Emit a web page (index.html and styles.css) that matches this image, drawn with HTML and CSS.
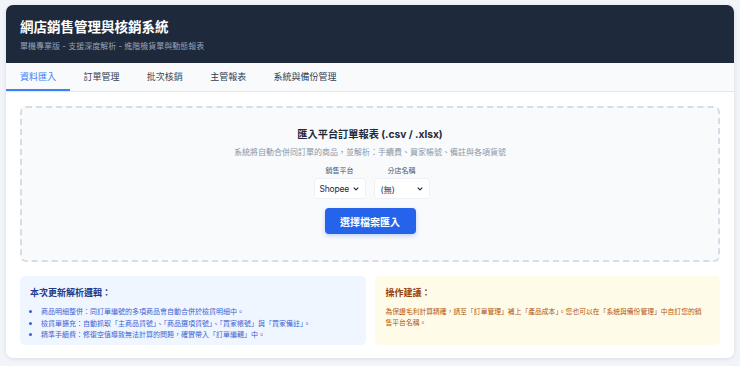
FILE: index.html
```html
<!DOCTYPE html>
<html lang="zh-Hant">
<head>
<meta charset="utf-8">
<title>網店銷售管理與核銷系統</title>
<link rel="stylesheet" href="styles.css">
</head>
<body>
<div class="card">
  <header class="header">
    <h1 class="title">網店銷售管理與核銷系統</h1>
    <p class="subtitle">單機專業版 - 支援深度解析 - 進階檢貨單與動態報表</p>
  </header>
  <nav class="tabs">
    <span class="tab active">資料匯入</span>
    <span class="tab">訂單管理</span>
    <span class="tab">批次核銷</span>
    <span class="tab">主管報表</span>
    <span class="tab">系統與備份管理</span>
  </nav>
  <main class="content">
    <section class="dropzone">
      <h2 class="dz-title">匯入平台訂單報表 (.csv / .xlsx)</h2>
      <p class="dz-desc">系統將自動合併同訂單的商品，並解析：手續費、買家帳號、備註與各項貨號</p>
      <div class="fields">
        <div class="field">
          <span class="field-label">銷售平台</span>
          <div class="select sel-platform"><span>Shopee</span>
            <svg class="chev" width="6" height="4" viewBox="0 0 7 5"><path d="M1 1l2.5 2.5L6 1" fill="none" stroke="#1f2937" stroke-width="1.4" stroke-linecap="round" stroke-linejoin="round"/></svg>
          </div>
        </div>
        <div class="field">
          <span class="field-label">分店名稱</span>
          <div class="select sel-shop"><span>(無)</span>
            <svg class="chev" width="6" height="4" viewBox="0 0 7 5"><path d="M1 1l2.5 2.5L6 1" fill="none" stroke="#1f2937" stroke-width="1.4" stroke-linecap="round" stroke-linejoin="round"/></svg>
          </div>
        </div>
      </div>
      <button class="btn">選擇檔案匯入</button>
    </section>
    <section class="info-grid">
      <div class="info info-blue">
        <h3 class="info-title">本次更新解析邏輯：</h3>
        <ul class="info-list">
          <li>商品明細整併：同訂單編號的多項商品會自動合併於檢貨明細中。</li>
          <li>檢貨單擴充：自動抓取「主商品貨號」、「商品選項貨號」、「買家帳號」與「買家備註」。</li>
          <li>精準手續費：修復空值導致無法計算的問題，確實帶入「訂單編輯」中。</li>
        </ul>
      </div>
      <div class="info info-yellow">
        <h3 class="info-title">操作建議：</h3>
        <p class="info-text">為保證毛利計算精確，請至「訂單管理」補上「產品成本」。您也可以在「系統與備份管理」中自訂您的銷售平台名稱。</p>
      </div>
    </section>
  </main>
</div>
</body>
</html>
```
FILE: styles.css
```css
* { box-sizing: border-box; margin: 0; padding: 0; }
html, body { height: 100%; }
body {
  background: #f1f5f9;
  padding: 5px 6px;
  font-family: "Inter", "Noto Sans CJK TC", sans-serif;
  color: #1e293b;
}
.card {
  background: #ffffff;
  border-radius: 7px;
  overflow: hidden;
  box-shadow: 0 1px 4px rgba(15, 23, 42, 0.10);
}
.header {
  background: #1e293b;
  height: 58px;
  padding: 12px 14px 0;
}
.title {
  color: #ffffff;
  font-size: 13.5px;
  font-weight: 700;
  line-height: 20px;
}
.subtitle {
  color: #94a3b8;
  font-size: 8px;
  line-height: 12px;
  margin-top: 3px;
}
.tabs {
  display: flex;
  background: #f8fafc;
  border-bottom: 1px solid #e2e8f0;
  height: 29px;
}
.tab {
  padding: 0 13.7px;
  font-size: 9px;
  line-height: 27px;
  color: #334155;
  border-bottom: 2px solid transparent;
}
.tab.active {
  color: #3b82f6;
  border-bottom-color: #3b82f6;
  padding-left: 14px;
}
.content {
  padding: 14px 14px 13px;
}
.dropzone {
  background: #f8fafc;
  border: 2px dashed #d6dde6;
  border-radius: 6px;
  height: 156px;
  padding: 18px 20px 0;
  display: flex;
  flex-direction: column;
  align-items: center;
}
.dz-title {
  font-size: 10.2px;
  font-weight: 700;
  line-height: 16px;
  color: #1e293b;
}
.dz-desc {
  font-size: 8px;
  line-height: 13px;
  color: #8a96a8;
  margin-top: 4px;
}
.fields {
  display: flex;
  gap: 10px;
  margin-top: 7px;
  margin-left: 3px;
}
.field {
  display: flex;
  flex-direction: column;
  align-items: center;
  gap: 3px;
}
.field-label {
  font-size: 7px;
  line-height: 10px;
  color: #475569;
}
.select {
  display: flex;
  align-items: center;
  justify-content: space-between;
  height: 19px;
  background: #ffffff;
  border-radius: 3px;
  box-shadow: 0 0 0 1px #eef1f5;
  font-size: 8.5px;
  letter-spacing: -0.2px;
  color: #1f2937;
  padding: 0 6px 0 5px;
}
.sel-platform { width: 50px; }
.sel-shop { width: 54px; padding-left: 6px; }
.chev { flex: none; }
.btn {
  margin-top: 10px;
  width: 91px;
  height: 26px;
  border: none;
  border-radius: 4px;
  background: #2563eb;
  color: #ffffff;
  font-family: inherit;
  font-size: 10px;
  font-weight: 700;
  box-shadow: 0 2px 4px rgba(37, 99, 235, 0.25);
}
.info-grid {
  display: grid;
  grid-template-columns: 1fr 1fr;
  gap: 9px;
  margin-top: 14px;
}
.info {
  height: 69px;
  border-radius: 5px;
  padding: 10px 10px 0;
}
.info-blue { background: #eff6ff; }
.info-yellow { background: #fefce8; padding-left: 11px; padding-right: 12px; }
.info-title {
  font-size: 9px;
  font-weight: 700;
  line-height: 14px;
}
.info-blue .info-title { color: #1e3a8a; }
.info-yellow .info-title { color: #92400e; }
.info-list {
  margin-top: 6px;
  padding-left: 11px;
  color: #3b63d3;
  font-size: 7px;
  line-height: 11.5px;
  list-style: disc;
}
.info-list li::marker { font-size: 8px; }
.info-text {
  margin-top: 6px;
  color: #b45309;
  font-size: 6.8px;
  line-height: 11px;
}
```
